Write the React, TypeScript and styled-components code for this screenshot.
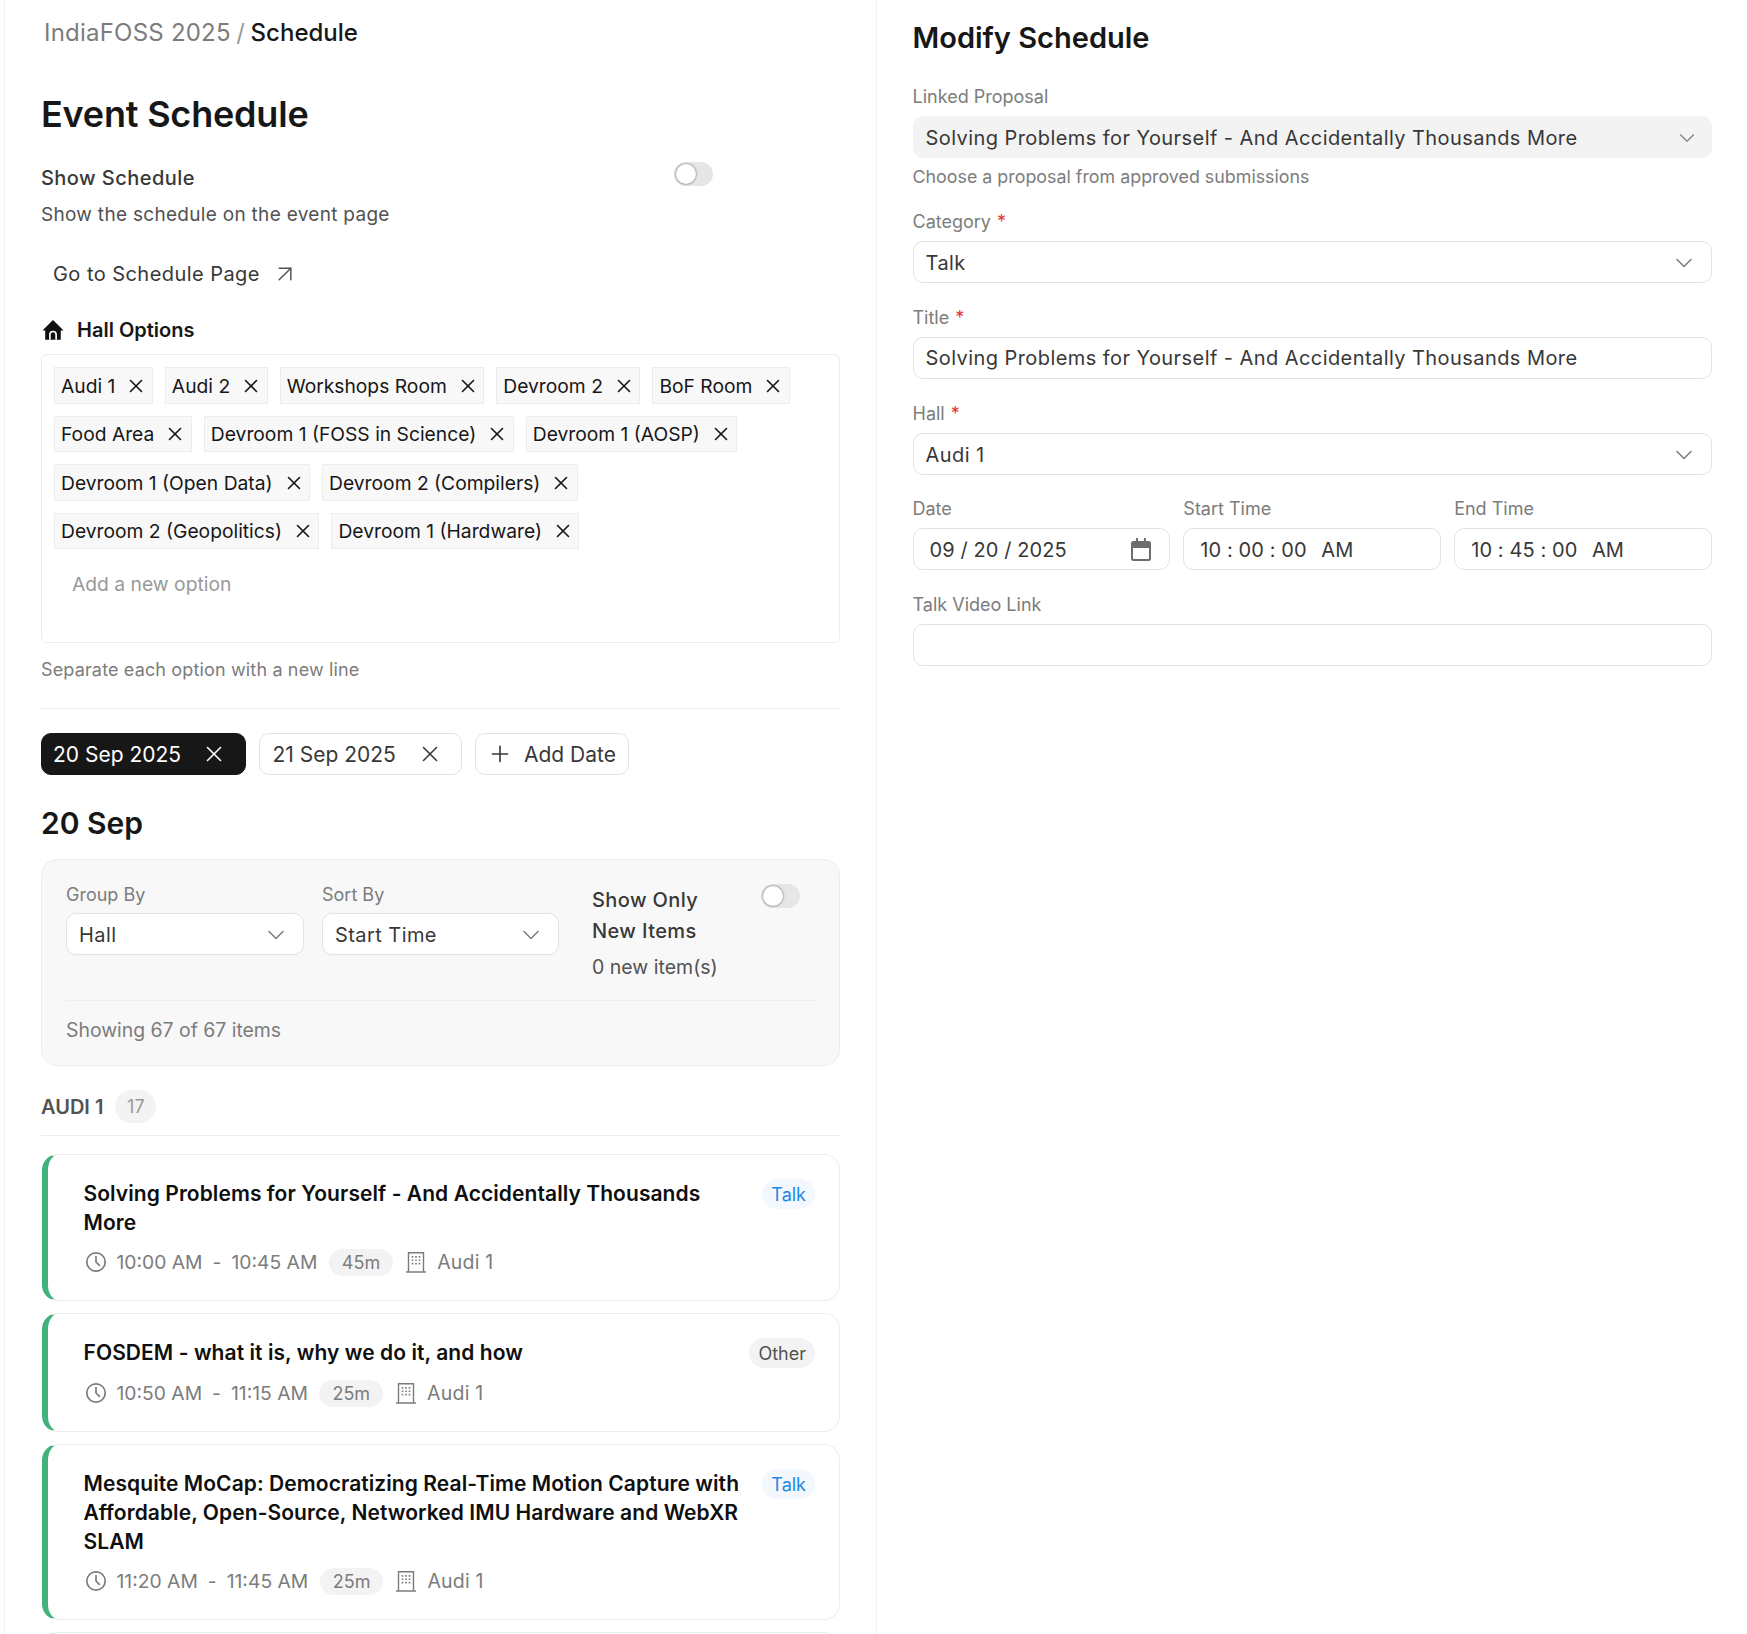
import React from "react";
import styled, { createGlobalStyle } from "styled-components";
import { X, ChevronDown, Plus, ArrowUpRight } from "lucide-react";

const Global = createGlobalStyle`
  html, body { margin: 0; padding: 0; background: #fff; }
  * { box-sizing: border-box; }
  body { font-family: Inter, "Noto Sans", sans-serif; color: #171717; }
`;

const Page = styled.div`
  display: flex; height: 1634px; overflow: hidden; padding-left: 4px; background: #fff;
`;
const LeftPane = styled.main`
  width: 873px; flex: none; padding: 18px 36px 0; border-left: 1px solid #f0f0f0; border-right: 1px solid #f0f0f0;
`;
const RightPane = styled.aside`
  flex: 1; padding: 18px 35px 0 35.5px;
`;
const Crumbs = styled.div`
  font-size: 24px; line-height: 30px; color: #7c7c7c; padding-left: 3px; margin-bottom: 44px; letter-spacing: .22px;
  b { font-weight: 500; color: #171717; letter-spacing: 0; }
  i { font-style: normal; color: #999; margin: 0 -1.5px; }
`;
const PageTitle = styled.h1`
  margin: 0 0 26px; font-size: 36px; line-height: 44px; font-weight: 600; letter-spacing: -0.2px;
`;
const SwitchRow = styled.div`
  display: flex; justify-content: space-between; align-items: flex-start; width: 672px;
`;
const SwitchLabel = styled.div`
  font-size: 20px; line-height: 30px; font-weight: 450; letter-spacing: .45px; color: #383838; margin-top: 1px;
`;
const Toggle = styled.span`
  position: relative; display: block; width: 39px; height: 24px; border-radius: 12px; background: #e6e6e6; flex: none;
  &::after {
    content: ""; position: absolute; left: 2px; top: 2px; width: 20px; height: 20px; border-radius: 50%;
    background: #fff; box-shadow: 0 0 2px 0.5px rgba(0,0,0,.4);
  }
`;
const Description = styled.p`
  margin: 8px 0 0; font-size: 19px; line-height: 28px; letter-spacing: .3px; color: #525252;
`;
const LinkButton = styled.a`
  display: inline-flex; align-items: center; gap: 11px; height: 42px; padding: 0 12px; margin-top: 24px;
  font-size: 20px; letter-spacing: .45px; color: #383838; svg { color: #525252; }
`;
const SectionHead = styled.div`
  display: flex; align-items: center; gap: 13px; height: 28px; margin: 21px 0 10px;
  font-size: 20px; font-weight: 600; color: #171717; padding-left: 1px;
`;
const OptionBox = styled.div`
  height: 289px; border: 1px solid #ededed; border-radius: 6px; padding: 12px;
`;
const ChipWrap = styled.div`
  display: flex; flex-wrap: wrap; gap: 12px;
`;
const Chip = styled.span`
  display: inline-flex; align-items: center; gap: 10px; height: 36.5px; padding: 1px 4.5px 0 6px;
  background: #f8f8f8; border: 1px solid #ededed; font-size: 19.25px; color: #171717;
`;
const Placeholder = styled.div`
  margin: 19px 0 0 18px; font-size: 19.3px; line-height: 32px; color: #999;
`;
const Help = styled.p`
  margin: 15px 0 0; font-size: 18px; line-height: 24px; letter-spacing: .15px; color: #7c7c7c;
`;
const Rule = styled.hr`
  margin: 26px 0 24px; border: 0; border-top: 1px solid #ededed;
`;
const Tabs = styled.div`
  display: flex; gap: 13px;
`;
const DateTab = styled.span<{ $active?: boolean }>`
  display: inline-flex; align-items: center; justify-content: space-between; min-width: ${p => (p.$active ? 205 : 203)}px; height: 42px;
  padding: 0 18px 0 ${p => (p.$active ? 11 : 12.5)}px; border-radius: 10px;
  font-size: 21px; border: 1px solid ${p => (p.$active ? "#171717" : "#e2e2e2")};
  background: ${p => (p.$active ? "#171717" : "#fff")}; color: ${p => (p.$active ? "#fff" : "#383838")};
`;
const AddDate = styled(DateTab)`
  min-width: 0; gap: 11px; padding: 0 12px 0 11px;
`;
const DayTitle = styled.h2`
  margin: 28px 0 16px; font-size: 30px; line-height: 40px; font-weight: 600;
`;
const FilterCard = styled.section`
  height: 207px; padding: 24px 24px 0; background: #f8f8f8; border: 1px solid #ededed; border-radius: 16px;
`;
const FilterGrid = styled.div`
  display: grid; grid-template-columns: 238px 237px 1fr; column-gap: 18px; height: 116px;
`;
const SmallLabel = styled.div`
  font-size: 18px; line-height: 22px; color: #7c7c7c; margin-bottom: 7px;
`;
const SelectBox = styled.div<{ $muted?: boolean; $iconRight?: number }>`
  display: flex; align-items: center; justify-content: space-between; height: 42px;
  padding: 1px ${p => p.$iconRight ?? 13}px 0 12px; border-radius: 10px; font-size: 20px; letter-spacing: .43px; color: #383838;
  background: ${p => (p.$muted ? "#f3f3f3" : "#fff")};
  border: 1px solid ${p => (p.$muted ? "#f3f3f3" : "#e2e2e2")};
  svg { color: #7c7c7c; flex: none; }
`;
const NewItems = styled.div`
  display: flex; justify-content: space-between; align-items: flex-start; padding: 0 15px 0 15px;
`;
const NewTitle = styled.div`
  width: 130px; margin-top: 1px; font-size: 20px; line-height: 31px; font-weight: 450; letter-spacing: .4px; color: #383838;
`;
const NewCount = styled.div`
  font-size: 19.5px; line-height: 28px; color: #525252; margin-top: 6px;
`;
const FilterRule = styled.div`
  border-top: 1px solid #ededed; padding-top: 15px; font-size: 19.4px; line-height: 28px; color: #7c7c7c;
`;
const GroupHead = styled.div`
  display: flex; align-items: center; gap: 12px; margin-top: 24px; padding-bottom: 12px; border-bottom: 1px solid #ededed;
  font-size: 20px; font-weight: 600; color: #525252;
`;
const CountBadge = styled.span`
  display: inline-flex; align-items: center; justify-content: center; width: 41px; height: 33px; border-radius: 17px;
  background: #f3f3f3; color: #999; font-size: 18px; font-weight: 400;
`;
const Cards = styled.div`
  display: flex; flex-direction: column; gap: 12px; margin-top: 18px;
`;
const Card = styled.article`
  margin-left: 1px; border: 1px solid #ededed; border-left: 6px solid #41b27c; border-radius: 16px;
  padding: 24px 24px 24.5px 35.5px; background: #fff;
`;
const CardTop = styled.div`
  display: flex; justify-content: space-between; align-items: flex-start; gap: 16px;
`;
const CardTitle = styled.h3`
  margin: 0; font-size: 21px; line-height: 29px; font-weight: 600; letter-spacing: .07px; color: #0f0f0f;
`;
const KindBadge = styled.span<{ $talk?: boolean }>`
  flex: none; display: inline-flex; align-items: center; height: 30px; padding: 0 9px; border-radius: 15px; font-size: 18px;
  background: ${p => (p.$talk ? "#f2f8fe" : "#f3f3f3")}; color: ${p => (p.$talk ? "#1d87e6" : "#525252")};
`;
const Meta = styled.div`
  display: flex; align-items: center; height: 27px; margin-top: 11.5px; font-size: 19.3px; color: #7c7c7c;
  svg { flex: none; }
`;
const Times = styled.span`
  margin-left: 9px;
`;
const Dash = styled.span`
  margin: 0 10px;
`;
const Duration = styled.span`
  display: inline-flex; align-items: center; height: 27px; padding: 0 13px; margin: 0 12px 0 11.5px; border-radius: 14px; background: #f3f3f3; font-size: 18px;
`;
const Place = styled.span`
  margin-left: 10px; font-size: 19.5px; letter-spacing: .2px;
`;
const CutCard = styled.div`
  height: 60px; margin-left: 1px; border: 1px solid #ededed; border-left: 6px solid #41b27c; border-radius: 16px;
`;
const FormTitle = styled.h2`
  margin: 0 0 27px; font-size: 29px; line-height: 40px; font-weight: 600;
`;
const Form = styled.div`
  display: flex; flex-direction: column; gap: 23px;
`;
const Field = styled.div``;
const FormLabel = styled.label`
  display: block; font-size: 18px; line-height: 24px; color: #7c7c7c; margin-bottom: 7px;
  em { font-style: normal; color: #e03636; margin-left: 1px; }
`;
const FormHelp = styled.p`
  margin: 9px 0 0; font-size: 17.85px; line-height: 20px; color: #7c7c7c;
`;
const TextInput = styled.input`
  display: block; width: 100%; height: 42px; padding: 0 12px; border: 1px solid #e2e2e2; border-radius: 10px; background: #fff;
  font-family: Inter, sans-serif; font-size: 20px; letter-spacing: .43px; color: #383838; outline: none;
`;
const PickerValue = styled.div`
  display: flex; align-items: center; justify-content: space-between; height: 42px; padding: 2px 17px 0 16px;
  border: 1px solid #e2e2e2; border-radius: 10px; background: #fff; font-size: 20px; letter-spacing: .1px; color: #383838; white-space: pre;
  svg { margin-top: -2px; }
`;
const Meridiem = styled.span`
  margin-left: 3px;
`;
const TimeText = styled.span``;
const DateGrid = styled.div`
  display: grid; grid-template-columns: repeat(3, 1fr); gap: 13px; margin-top: -1px;
`;

const HomeGlyph = () => (
  <svg width="22" height="22" viewBox="0 0 24 24" aria-hidden="true">
    <path fill="#111" d="M12 1 23.5 12.5H20.5V22.5H3.5V12.5H.5z" />
    <path fill="none" stroke="#fff" strokeWidth="1.8" d="M8.6 22.5v-5.5a3.4 3.4 0 0 1 6.8 0v5.5" />
  </svg>
);
const ClockGlyph = () => (
  <svg width="24" height="24" viewBox="0 0 24 24" fill="none" stroke="currentColor" strokeWidth="1.7" strokeLinecap="round" strokeLinejoin="round" aria-hidden="true">
    <circle cx="12" cy="12" r="9.2" />
    <path d="M12 6.5V12l3.4 3.4" />
  </svg>
);
const BuildingGlyph = () => (
  <svg width="22" height="22" viewBox="0 0 22 22" fill="none" stroke="currentColor" strokeWidth="1.4" aria-hidden="true">
    <path d="M1 21h20M3.5 21V1.7h15V21" />
    <path strokeWidth="1.6" strokeDasharray="1.7 1.7" d="M7.5 5v9M11 5v9M14.5 5v9" />
  </svg>
);
const CalendarGlyph = () => (
  <svg width="22" height="23" viewBox="0 0 22 23" aria-hidden="true">
    <path fill="#6e6e6e" fillRule="evenodd" d="M6 0h2v3h6V0h2v3h2.5A2.5 2.5 0 0 1 21 5.5v15a2.5 2.5 0 0 1-2.5 2.5h-15A2.5 2.5 0 0 1 1 20.5v-15A2.5 2.5 0 0 1 3.5 3H6zM3 10v10a1 1 0 0 0 1 1h14a1 1 0 0 0 1-1V10z" />
  </svg>
);

const halls = [
  "Audi 1", "Audi 2", "Workshops Room", "Devroom 2", "BoF Room", "Food Area",
  "Devroom 1 (FOSS in Science)", "Devroom 1 (AOSP)", "Devroom 1 (Open Data)",
  "Devroom 2 (Compilers)", "Devroom 2 (Geopolitics)", "Devroom 1 (Hardware)",
];
const sessions = [
  { title: "Solving Problems for Yourself - And Accidentally Thousands More", kind: "Talk", from: "10:00 AM", to: "10:45 AM", len: "45m" },
  { title: "FOSDEM - what it is, why we do it, and how", kind: "Other", from: "10:50 AM", to: "11:15 AM", len: "25m" },
  { title: "Mesquite MoCap: Democratizing Real-Time Motion Capture with Affordable, Open-Source, Networked IMU Hardware and WebXR SLAM", kind: "Talk", from: "11:20 AM", to: "11:45 AM", len: "25m" },
];

export default function App() {
  return (
    <>
      <Global />
      <Page>
        <LeftPane>
          <Crumbs>IndiaFOSS 2025 <i>/</i> <b>Schedule</b></Crumbs>
          <PageTitle>Event Schedule</PageTitle>
          <SwitchRow>
            <SwitchLabel>Show Schedule</SwitchLabel>
            <Toggle />
          </SwitchRow>
          <Description>Show the schedule on the event page</Description>
          <LinkButton>Go to Schedule Page <ArrowUpRight size={28} strokeWidth={1.25} /></LinkButton>
          <SectionHead><HomeGlyph /> Hall Options</SectionHead>
          <OptionBox>
            <ChipWrap>
              {halls.map(h => (
                <Chip key={h}>{h}<X size={22} strokeWidth={1.75} /></Chip>
              ))}
            </ChipWrap>
            <Placeholder>Add a new option</Placeholder>
          </OptionBox>
          <Help>Separate each option with a new line</Help>
          <Rule />
          <Tabs>
            <DateTab $active>20 Sep 2025 <X size={26} strokeWidth={1.5} /></DateTab>
            <DateTab>21 Sep 2025 <X size={26} strokeWidth={1.5} /></DateTab>
            <AddDate><Plus size={26} strokeWidth={1.5} /> Add Date</AddDate>
          </Tabs>
          <DayTitle>20 Sep</DayTitle>
          <FilterCard>
            <FilterGrid>
              <div>
                <SmallLabel>Group By</SmallLabel>
                <SelectBox>Hall <ChevronDown size={28} strokeWidth={1.25} /></SelectBox>
              </div>
              <div>
                <SmallLabel>Sort By</SmallLabel>
                <SelectBox>Start Time <ChevronDown size={28} strokeWidth={1.25} /></SelectBox>
              </div>
              <NewItems>
                <div>
                  <NewTitle>Show Only New Items</NewTitle>
                  <NewCount>0 new item(s)</NewCount>
                </div>
                <Toggle />
              </NewItems>
            </FilterGrid>
            <FilterRule>Showing 67 of 67 items</FilterRule>
          </FilterCard>
          <GroupHead>AUDI 1 <CountBadge>17</CountBadge></GroupHead>
          <Cards>
            {sessions.map(s => (
              <Card key={s.title}>
                <CardTop>
                  <CardTitle>{s.title}</CardTitle>
                  <KindBadge $talk={s.kind === "Talk"}>{s.kind}</KindBadge>
                </CardTop>
                <Meta>
                  <ClockGlyph />
                  <Times>{s.from}<Dash>-</Dash>{s.to}</Times>
                  <Duration>{s.len}</Duration>
                  <BuildingGlyph />
                  <Place>Audi 1</Place>
                </Meta>
              </Card>
            ))}
            <CutCard />
          </Cards>
        </LeftPane>
        <RightPane>
          <FormTitle>Modify Schedule</FormTitle>
          <Form>
            <Field>
              <FormLabel>Linked Proposal</FormLabel>
              <SelectBox $muted $iconRight={11}>
                Solving Problems for Yourself - And Accidentally Thousands More
                <ChevronDown size={26} strokeWidth={1} />
              </SelectBox>
              <FormHelp>Choose a proposal from approved submissions</FormHelp>
            </Field>
            <Field>
              <FormLabel>Category <em>*</em></FormLabel>
              <SelectBox>Talk <ChevronDown size={28} strokeWidth={1.25} /></SelectBox>
            </Field>
            <Field>
              <FormLabel>Title <em>*</em></FormLabel>
              <TextInput readOnly value="Solving Problems for Yourself - And Accidentally Thousands More" />
            </Field>
            <Field>
              <FormLabel>Hall <em>*</em></FormLabel>
              <SelectBox>Audi 1 <ChevronDown size={28} strokeWidth={1.25} /></SelectBox>
            </Field>
            <DateGrid>
              <Field>
                <FormLabel>Date</FormLabel>
                <PickerValue>09 / 20 / 2025<CalendarGlyph /></PickerValue>
              </Field>
              <Field>
                <FormLabel>Start Time</FormLabel>
                <PickerValue><TimeText>10 : 00 : 00  <Meridiem>AM</Meridiem></TimeText></PickerValue>
              </Field>
              <Field>
                <FormLabel>End Time</FormLabel>
                <PickerValue><TimeText>10 : 45 : 00  <Meridiem>AM</Meridiem></TimeText></PickerValue>
              </Field>
            </DateGrid>
            <Field>
              <FormLabel>Talk Video Link</FormLabel>
              <TextInput readOnly />
            </Field>
          </Form>
        </RightPane>
      </Page>
    </>
  );
}
